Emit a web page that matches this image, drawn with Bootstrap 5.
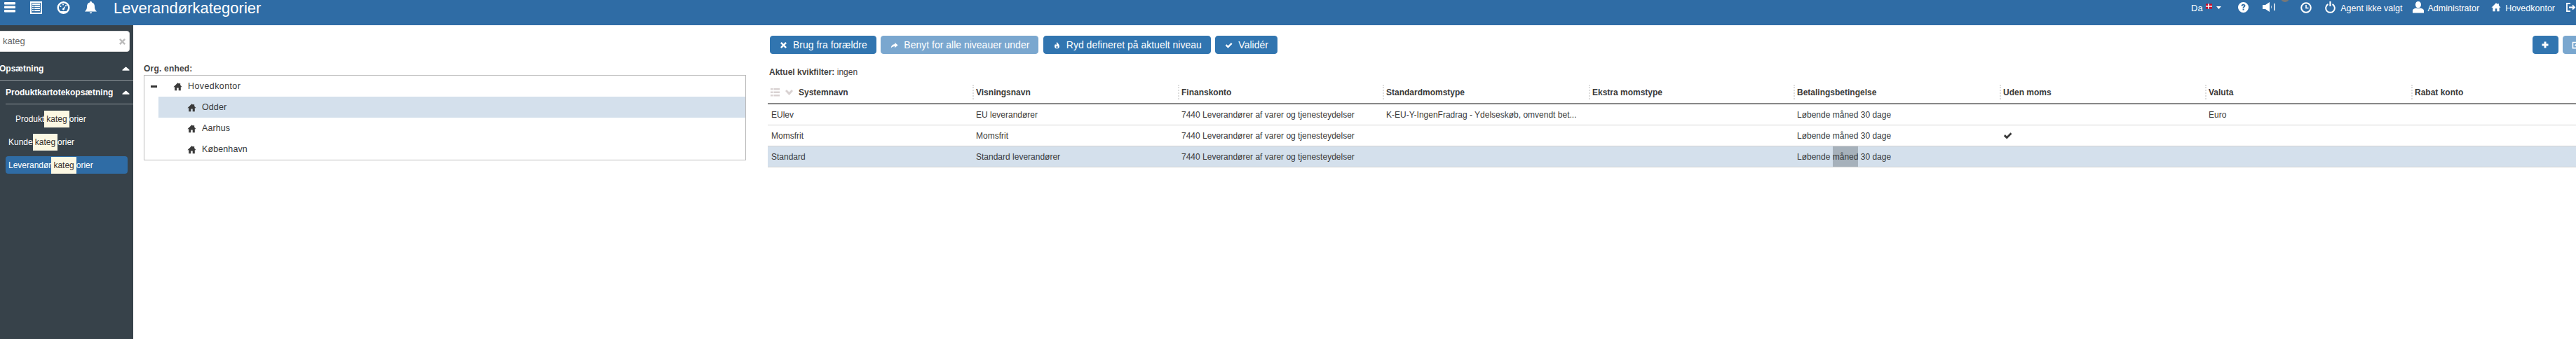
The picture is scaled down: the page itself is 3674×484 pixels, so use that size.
<!DOCTYPE html>
<html lang="da">
<head>
    <meta charset="UTF-8">
    <meta name="viewport" content="width=device-width, initial-scale=1.0">
    <title>Leverandørkategorier</title>
    <link href="https://cdn.jsdelivr.net/npm/bootstrap@5.3.0/dist/css/bootstrap.min.css" rel="stylesheet">
    <style>
        html, body { height: 100%; overflow: hidden; }
        body { font-family: "Liberation Sans", Arial, sans-serif; font-size: 12px; color: #3a3a3a; background: #fff; }
        .ikon { fill: currentColor; flex: none; display: block; }

        /* topbar */
        .topbar { height: 36px; background: #2f6ca5; color: #fff; overflow: hidden; flex: none; }
        .top-venstre { padding: 2px 0 0 6px; gap: 21px; }
        .top-titel { font-size: 22px; line-height: 24px; margin-left: 24px; }
        .top-hoejre { font-size: 13px; line-height: 18px; padding-top: 3px; width: 549px; flex: none; margin-left: auto; position: relative; white-space: nowrap; }
        .top-tekst { font-size: 12.5px; }
        .flag-dk { width: 16px; height: 12px; margin-left: 4px; }
        .spk-prik { position: absolute; left: 128px; top: -9px; width: 12px; height: 12px; border-radius: 50%; background: #777; }

        /* sidemenu */
        .sidemenu { width: 190px; flex: none; background: #37424a; color: #fff; font-weight: 400; }
        .sog-felt { height: 30px; margin: 8px 5px 0 -6px; background: #fff; border: 1px solid #ddd; border-radius: 4px; padding: 0 4px 0 9px; color: #666; font-size: 13px; }
        .sog-luk { color: #bbb; }
        .menu-hoved { font-weight: 700; font-size: 12px; height: 34px; border-bottom: 1px solid #8d9499; padding-right: 5px; }
        .menu-hoved.niv1 { margin-top: 7px; margin-left: -1px; }
        .menu-hoved.niv2 { margin-left: 8px; }
        .menu-punkt { height: 25px; margin: 8px 8px 0; padding-left: 4px; border-radius: 4px; white-space: nowrap; font-size: 12px; }
        .menu-punkt.forst { padding-left: 14px; margin-top: 8px; }
        .menu-punkt.aktiv { background: #2f6ca5; }
        .treff { background: #fcf8e3; color: #333; padding: 3px; }

        /* org. enhed */
        .org-panel { width: 874px; flex: none; padding: 53px 0 0 15px; }
        .org-label { font-weight: 700; font-size: 12px; line-height: 18px; color: #444; letter-spacing: .2px; }
        .org-boks { border: 1px solid #bbb; height: 122px; }
        .org-raekke { height: 30px; font-size: 12.5px; letter-spacing: .1px; }
        .org-raekke.rod { padding-left: 9px; letter-spacing: .4px; }
        .org-raekke.under { margin-left: 20px; padding-left: 41px; }
        .org-raekke.valgt { background: #d4e0ec; }
        .org-minus { width: 9px; height: 3px; background: #333; margin-right: 23px; }

        /* hoejre side */
        .hoved-panel { min-width: 0; flex: 1 1 0; overflow: hidden; padding: 15px 0 0 31px; }
        .knap-raekke { width: 2594px; height: 26px; margin-left: 3px; gap: 6.5px; }
        .knap-bla { --bs-btn-bg: #3175b0; --bs-btn-border-color: #3175b0; --bs-btn-color: #fff; --bs-btn-disabled-bg: #7aa7cf; --bs-btn-disabled-border-color: #7aa7cf; --bs-btn-disabled-color: #fff; --bs-btn-disabled-opacity: 1; font-size: 14px; height: 26px; padding: 0 12px 0 13px; border-radius: 4px; white-space: nowrap; gap: 8px; }
        .knap-ikon { width: 37px; padding: 0; }
        .kvik { line-height: 18px; margin: 17px 0 0 2px; color: #444; }
        .kat-tabel { table-layout: fixed; width: 2930px; margin: 9px 0 0; font-size: 12px; color: #3a3a3a; --bs-table-color: #3a3a3a; border-collapse: separate; border-spacing: 0; }
        .kat-tabel th { font-weight: 700; padding: 0; height: 28px; border-bottom: 2px solid #888; vertical-align: top; }
        .kol-navn { display: flex; align-items: center; height: 21px; border-left: 2px dotted #ddd; padding-left: 3px; }
        .kol-forst { display: flex; align-items: center; height: 21px; padding-left: 4px; }
        .kol-ikon { color: #d9d2d2; }
        .kat-tabel td { padding: 0 0 0 5px; height: 30px; border-bottom: 1px solid #d2d2d2; vertical-align: middle; white-space: nowrap; overflow: hidden; }
        .kat-tabel tr.valgt td { --bs-table-bg: #d4e0ec; background: #d4e0ec; }
        .soeg-hit { background: #a6b1bb; padding: 8px 0; }
    </style>
</head>
<body class="d-flex flex-column">
    <svg width="0" height="0" class="position-absolute">
        <symbol id="i-hus" viewBox="0 0 16 16"><path d="M8 1.500 .5 8.800h2.200V15h3.800v-4.500h3V15h3.800V8.800h2.200L12.500 5.400V2.500h-2v1z"/></symbol>
        <symbol id="i-luk" viewBox="0 0 16 16"><path d="M4 1.500 8 5.500l4-4L14.500 4l-4 4 4 4L12 14.500l-4-4-4 4L1.500 12l4-4-4-4z"/></symbol>
        <symbol id="i-pil" viewBox="0 0 16 16"><path d="M1 14C1.500 8.500 5.500 6 9 5.800V2.500L15.500 8 9 13.500V10C6 10 3 11.200 1 14z"/></symbol>
        <symbol id="i-ild" viewBox="0 0 16 16"><path d="M8 1c1 3 5 5 5 9a5 5 0 0 1-10 0c0-2 1-3.500 2-4.500 0 1.500.5 2.500 1.500 2.500C7.500 6 6.500 4 8 1zm0 8c-1 1-1.800 2-1.800 3a1.800 1.800 0 0 0 3.600 0C9.800 11 9 10 8 9z" fill-rule="evenodd"/></symbol>
        <symbol id="i-flueben" viewBox="0 0 16 16"><path d="M1 8.800 3.500 6.300l3 3L13 2.800 15.300 5.300 6.500 14z"/></symbol>
        <symbol id="i-op" viewBox="0 0 12 6"><path d="M6 .3c.4 0 .7.2 1 .5L11.500 5c.3.400.1 1-.4 1H.9C.4 6 .2 5.400.5 5L5 .8c.3-.3.600-.5 1-.5z"/></symbol>
        <symbol id="i-plus" viewBox="0 0 16 16"><path d="M6 2h4v4h4v4h-4v4H6v-4H2V6h4z"/></symbol>
        <symbol id="i-ret" viewBox="0 0 16 16"><path fill-rule="evenodd" d="M2 2h10l-2 2H4v8h8V9l2-2v7H2zM14 .5 15.500 2 8 9.500H6.500V8z"/></symbol>
    </svg>

    <header class="topbar d-flex align-items-start">
        <div class="top-venstre d-flex align-items-start">
            <svg class="ikon" width="16" height="16" viewBox="0 0 16 16"><rect y="1" width="16" height="3.600" rx="1"/><rect y="6.500" width="16" height="3.600" rx="1"/><rect y="12" width="16" height="3.600" rx="1"/></svg>
            <svg class="ikon" width="17" height="18" viewBox="0 0 17 18"><path fill-rule="evenodd" d="M0 0h17v18H0zM2 2v14h13V2zM3 3h11v2H3zM3 6h2v2H3zM6 6h8v2H6zM3 9h2v2H3zM6 9h8v2H6zM3 12h2v2H3zM6 12h8v2H6z"/></svg>
            <svg class="ikon" width="19" height="18" viewBox="0 0 19 18"><path fill-rule="evenodd" d="M9.500 0a9 9 0 1 1 0 18 9 9 0 0 1 0-18zm0 2.500a6.500 6.500 0 0 0-6.500 6.500c0 2 1 3.800 2.400 5h8.200c1.400-1.200 2.400-3 2.400-5a6.500 6.500 0 0 0-6.500-6.500z"/><circle cx="9" cy="4.500" r="1"/><circle cx="5.500" cy="7" r="1"/><circle cx="13" cy="6" r="1"/><path d="M8 10.500 12.500 6.500 10.500 12a1.500 1.500 0 0 1-2.500-1.500z"/></svg>
            <svg class="ikon" width="17" height="19" viewBox="0 0 17 19"><path d="M8.500 0c1 0 1.500.6 1.500 1.400 3 .7 4 3 4 6 0 4 1.500 5 3 7H0c1.500-2 3-3 3-7 0-3 1-5.300 4-6C7 .6 7.500 0 8.500 0zM6.800 15.500h3.400a1.700 1.700 0 0 1-3.400 0z"/></svg>
        </div>
        <div class="top-titel">Leverandørkategorier</div>
        <div class="top-hoejre d-flex align-items-start">
            <span>Da</span>
            <svg class="flag-dk flex-none" viewBox="0 0 16 12"><rect width="16" height="12" fill="#c8102e"/><rect x="5" width="2.400" height="12" fill="#fff"/><rect y="4.800" width="16" height="2.400" fill="#fff"/></svg>
            <svg class="ikon" style="margin:6px 0 0 6px" width="7" height="4" viewBox="0 0 7 4"><path d="M0 0h7L3.500 4z"/></svg>
            <svg class="ikon" style="margin:0 0 0 24px" width="15" height="15" viewBox="0 0 16 16"><path fill-rule="evenodd" d="M8 0a8 8 0 1 1 0 16A8 8 0 0 1 8 0zM5 6h2c0-.8.400-1.200 1-1.200s1 .3 1 .9c0 1-2 1.300-2 3.300h2c0-1.300 2.200-1.600 2.200-3.500C11.200 4 9.800 3 8 3S5 4 5 6zm2 4v2.200h2.200V10z"/></svg>
            <svg class="ikon" style="margin:0 0 0 20px" width="19" height="14" viewBox="0 0 19 14"><path d="M0 4h4l6-4v14L4 10H0zM12 4.500c1 1.500 1 3.500 0 5zM16 2h1.500v10H16z"/></svg>
            <span class="spk-prik"></span>
            <svg class="ikon" style="margin:0 0 0 35px;fill:none;stroke:#fff" width="16" height="16" viewBox="0 0 16 16"><circle cx="8" cy="8" r="6.800" stroke-width="2"/><path d="M8 4v4.500h3.500" stroke-width="1.600"/></svg>
            <svg class="ikon" style="margin:-1px 0 0 19px;fill:none;stroke:#fff" width="15" height="17" viewBox="0 0 15 17"><path d="M4.500 4A6.300 6.300 0 1 0 10.500 4" stroke-width="2"/><path d="M7.500 0v7" stroke-width="2.200"/></svg>
            <span class="top-tekst" style="margin-left:7px">Agent ikke valgt</span>
            <svg class="ikon" style="margin:-1px 0 0 15px" width="16" height="17" viewBox="0 0 16 17"><path d="M8 0c2.500 0 4 2 4 4.500S10.500 9.500 8 9.500 4 7 4 4.500 5.500 0 8 0zM5 9.500c1.800 1 4.200 1 6 0 2.500.5 5 1.500 5 3.500v3.500H0V13c0-2 2.500-3 5-3.500z"/></svg>
            <span class="top-tekst" style="margin-left:5px">Administrator</span>
            <svg class="ikon" style="margin:0 0 0 17px" width="14" height="14"><use href="#i-hus"/></svg>
            <span class="top-tekst" style="margin-left:6px">Hovedkontor</span>
            <svg class="ikon" style="margin:1px 0 0 16px;fill:none;stroke:#fff" width="14" height="13" viewBox="0 0 14 13"><path d="M6 1H1v11h5M4 6.500h8M9 3.500l3 3-3 3" stroke-width="1.800"/></svg>
        </div>
    </header>

    <div class="d-flex flex-grow-1 overflow-hidden">
        <aside class="sidemenu">
            <div class="sog-felt d-flex align-items-center justify-content-between">
                <span>kateg</span>
                <svg class="ikon sog-luk" width="11" height="11"><use href="#i-luk"/></svg>
            </div>
            <div class="menu-hoved niv1 d-flex align-items-center justify-content-between">
                <span>Opsætning</span>
                <svg class="ikon" width="11" height="6"><use href="#i-op"/></svg>
            </div>
            <div class="menu-hoved niv2 d-flex align-items-center justify-content-between">
                <span>Produktkartotekopsætning</span>
                <svg class="ikon" width="11" height="6"><use href="#i-op"/></svg>
            </div>
            <div class="menu-punkt forst d-flex align-items-center">Produkt<span class="treff">kateg</span>orier</div>
            <div class="menu-punkt d-flex align-items-center">Kunde<span class="treff">kateg</span>orier</div>
            <div class="menu-punkt aktiv d-flex align-items-center">Leverandør<span class="treff">kateg</span>orier</div>
        </aside>

        <section class="org-panel">
            <div class="org-label">Org. enhed:</div>
            <div class="org-boks">
                <div class="org-raekke rod d-flex align-items-center">
                    <span class="org-minus"></span>
                    <svg class="ikon me-2" width="13" height="13"><use href="#i-hus"/></svg>
                    <span>Hovedkontor</span>
                </div>
                <div class="org-raekke under valgt d-flex align-items-center">
                    <svg class="ikon me-2" width="13" height="13"><use href="#i-hus"/></svg>
                    <span>Odder</span>
                </div>
                <div class="org-raekke under d-flex align-items-center">
                    <svg class="ikon me-2" width="13" height="13"><use href="#i-hus"/></svg>
                    <span>Aarhus</span>
                </div>
                <div class="org-raekke under d-flex align-items-center">
                    <svg class="ikon me-2" width="13" height="13"><use href="#i-hus"/></svg>
                    <span>København</span>
                </div>
            </div>
        </section>

        <main class="hoved-panel">
            <div class="knap-raekke d-flex">
                <button class="btn knap-bla d-inline-flex align-items-center" type="button"><svg class="ikon" width="11" height="11"><use href="#i-luk"/></svg>Brug fra forældre</button>
                <button class="btn knap-bla d-inline-flex align-items-center" type="button" disabled><svg class="ikon" width="11" height="11"><use href="#i-pil"/></svg>Benyt for alle niveauer under</button>
                <button class="btn knap-bla d-inline-flex align-items-center" type="button"><svg class="ikon" width="11" height="11"><use href="#i-ild"/></svg>Ryd defineret på aktuelt niveau</button>
                <button class="btn knap-bla d-inline-flex align-items-center" type="button"><svg class="ikon" width="11" height="11"><use href="#i-flueben"/></svg>Validér</button>
                <button class="btn knap-bla knap-ikon ms-auto d-inline-flex align-items-center justify-content-center" type="button"><svg class="ikon" width="12" height="12"><use href="#i-plus"/></svg></button>
                <button class="btn knap-bla knap-ikon d-inline-flex align-items-center justify-content-center" type="button" disabled><svg class="ikon" width="13" height="13"><use href="#i-ret"/></svg></button>
            </div>
            <div class="kvik"><strong>Aktuel kvikfilter:</strong> ingen</div>
            <table class="table kat-tabel">
                <colgroup>
                    <col style="width:292px"><col style="width:293px"><col style="width:292px"><col style="width:294px"><col style="width:292px"><col style="width:294px"><col style="width:293px"><col style="width:294px"><col style="width:293px"><col style="width:293px">
                </colgroup>
                <thead>
                    <tr>
                        <th>
                            <div class="kol-forst">
                                <svg class="ikon kol-ikon" width="13" height="12" viewBox="0 0 13 12"><path d="M0 0h3.500v2.500H0zM4.500 0H13v2.500H4.500zM0 4.500h3.500V7H0zM4.500 4.500H13V7H4.500zM0 9h3.500v2.500H0zM4.500 9H13v2.500H4.500z"/></svg>
                                <svg class="ikon kol-ikon" style="margin:0 8px 0 8px" width="11" height="8" viewBox="0 0 11 8"><path d="M0 2 2 0l3.500 3.500L9 0l2 2-5.500 6z"/></svg>
                                Systemnavn
                            </div>
                        </th>
                        <th><div class="kol-navn">Visningsnavn</div></th>
                        <th><div class="kol-navn">Finanskonto</div></th>
                        <th><div class="kol-navn">Standardmomstype</div></th>
                        <th><div class="kol-navn">Ekstra momstype</div></th>
                        <th><div class="kol-navn">Betalingsbetingelse</div></th>
                        <th><div class="kol-navn">Uden moms</div></th>
                        <th><div class="kol-navn">Valuta</div></th>
                        <th><div class="kol-navn">Rabat konto</div></th>
                        <th><div class="kol-navn"></div></th>
                    </tr>
                </thead>
                <tbody>
                    <tr>
                        <td>EUlev</td><td>EU leverandører</td><td>7440 Leverandører af varer og tjenesteydelser</td>
                        <td>K-EU-Y-IngenFradrag - Ydelseskøb, omvendt bet...</td><td></td><td>Løbende måned 30 dage</td><td></td><td>Euro</td><td></td><td></td>
                    </tr>
                    <tr>
                        <td>Momsfrit</td><td>Momsfrit</td><td>7440 Leverandører af varer og tjenesteydelser</td>
                        <td></td><td></td><td>Løbende måned 30 dage</td><td><svg class="ikon" width="13" height="13"><use href="#i-flueben"/></svg></td><td></td><td></td><td></td>
                    </tr>
                    <tr class="valgt">
                        <td>Standard</td><td>Standard leverandører</td><td>7440 Leverandører af varer og tjenesteydelser</td>
                        <td></td><td></td><td>Løbende <span class="soeg-hit">måned</span> 30 dage</td><td></td><td></td><td></td><td></td>
                    </tr>
                </tbody>
            </table>
        </main>
    </div>

    <script src="https://cdn.jsdelivr.net/npm/bootstrap@5.3.0/dist/js/bootstrap.bundle.min.js"></script>
</body>
</html>
